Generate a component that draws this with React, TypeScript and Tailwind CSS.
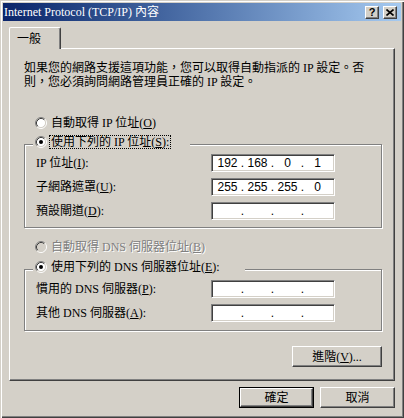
import React from "react";

function Radio({ checked, disabled }: { checked?: boolean; disabled?: boolean }) {
  return (
    <svg width="12" height="12" viewBox="0 0 12 12" className="shrink-0 block">
      <circle cx="6" cy="6" r="4.5" fill={disabled ? "#d4d0c8" : "#ffffff"} />
      <path d="M2.11 9.89A5.5 5.5 0 0 1 9.89 2.11" fill="none" stroke="#808080" />
      <path d="M9.89 2.11A5.5 5.5 0 0 1 2.11 9.89" fill="none" stroke="#ffffff" />
      <path d="M2.82 9.18A4.5 4.5 0 0 1 9.18 2.82" fill="none" stroke="#404040" />
      <path d="M9.18 2.82A4.5 4.5 0 0 1 2.82 9.18" fill="none" stroke="#d4d0c8" />
      {checked && <circle cx="6" cy="6" r="2" fill={disabled ? "#808080" : "#000000"} />}
    </svg>
  );
}

function IpBox({ v }: { v: string[] }) {
  return (
    <div className="w-[124px] h-[18px] bg-white border border-[#808080] border-b-white border-r-white shadow-[inset_1px_1px_#404040,inset_-1px_-1px_#d4d0c8] flex items-center pl-[3px] font-['Liberation_Sans',sans-serif] text-[12px] leading-[14px]">
      <span className="w-[25px] text-center">{v[0]}</span>
      <span className="w-[5px] text-center">.</span>
      <span className="w-[25px] text-center">{v[1]}</span>
      <span className="w-[5px] text-center">.</span>
      <span className="w-[25px] text-center">{v[2]}</span>
      <span className="w-[5px] text-center">.</span>
      <span className="w-[25px] text-center">{v[3]}</span>
    </div>
  );
}

function Row({ label, v }: { label: React.ReactNode; v: string[] }) {
  return (
    <div className="flex items-center h-[18px]">
      <div className="w-[175px] whitespace-nowrap">{label}</div>
      <IpBox v={v} />
    </div>
  );
}

function Raised({ children, className }: { children: React.ReactNode; className?: string }) {
  return (
    <div
      className={
        "flex items-center justify-center bg-[#d4d0c8] border border-white border-b-[#404040] border-r-[#404040] shadow-[inset_-1px_-1px_#808080] " +
        (className ?? "")
      }
    >
      {children}
    </div>
  );
}

export default function App() {
  return (
    <div className="w-[404px] h-[418px] bg-[#d4d0c8] p-[3px] shadow-[inset_1px_1px_#d4d0c8,inset_2px_2px_#ffffff,inset_-1px_-1px_#404040,inset_-2px_-2px_#808080] font-['Liberation_Serif','Noto_Sans_CJK_TC',serif] text-[12px] leading-[14px] text-black flex flex-col overflow-hidden">
      {/* Title bar */}
      <div className="h-[18px] shrink-0 flex items-center bg-linear-to-r from-[#0a246a] to-[#a6caf0] pl-[1px] pr-[4px]">
        <span className="text-white whitespace-nowrap">Internet Protocol (TCP/IP) 內容</span>
        <div className="ml-auto flex items-center gap-[4px]">
          <Raised className="w-[14px] h-[13px]">
            <span className="font-['Liberation_Sans',sans-serif] font-bold text-[11px] leading-[11px]">?</span>
          </Raised>
          <Raised className="w-[14px] h-[13px]">
            <svg width="8" height="7" viewBox="0 0 8 7" className="block">
              <path d="M0.5 0.5L7.5 6.5M7.5 0.5L0.5 6.5" stroke="#000" strokeWidth="1.6" />
            </svg>
          </Raised>
        </div>
      </div>

      {/* Tab area */}
      <div className="mt-[6px] px-[6px] flex flex-col">
        <div className="relative z-10 w-[52px] h-[22px] bg-[#d4d0c8] border-l border-t border-white border-r border-r-[#404040] rounded-tl-[2px] rounded-tr-[2px] shadow-[inset_-1px_0_#808080] pl-[7px] pt-[4px]">
          一般
        </div>
        <div className="-mt-[1px] w-[386px] h-[333px] border border-white border-b-[#404040] border-r-[#404040] shadow-[inset_-1px_-1px_#808080] flex flex-col">
          <p className="mt-[12px] ml-[14px] whitespace-nowrap">
            如果您的網路支援這項功能，您可以取得自動指派的 IP 設定。否
            <br />
            則，您必須詢問網路管理員正確的 IP 設定。
          </p>

          <div className="mt-[27px] ml-[25px] h-[14px] flex items-center gap-[4px]">
            <Radio />
            <span className="whitespace-nowrap">
              自動取得 IP 位址(<u>O</u>)
            </span>
          </div>

          {/* Group 1 */}
          <div className="relative mt-[14px] ml-[14px] w-[358px] h-[84px] border border-[#808080] shadow-[inset_1px_1px_#ffffff,1px_1px_#ffffff] pt-[9px] pl-[11px] flex flex-col gap-[6px]">
            <div className="absolute left-[8px] top-[-10px] w-[157px] h-[14px] bg-[#d4d0c8] flex items-center pl-[2px] gap-[2px]">
              <Radio checked />
              <span className="whitespace-nowrap border border-dotted border-black px-[1px] leading-[12px]">
                使用下列的 IP 位址(<u>S</u>):
              </span>
            </div>
            <Row label={<>IP 位址(<u>I</u>):</>} v={["192", "168", "0", "1"]} />
            <Row label={<>子網路遮罩(<u>U</u>):</>} v={["255", "255", "255", "0"]} />
            <Row label={<>預設閘道(<u>D</u>):</>} v={["", "", "", ""]} />
          </div>

          <div className="mt-[12px] ml-[25px] h-[14px] flex items-center gap-[4px]">
            <Radio disabled />
            <span className="whitespace-nowrap text-[#808080] [text-shadow:1px_1px_0_#ffffff]">
              自動取得 DNS 伺服器位址(<u>B</u>)
            </span>
          </div>

          {/* Group 2 */}
          <div className="relative mt-[15px] ml-[14px] w-[358px] h-[62px] border border-[#808080] shadow-[inset_1px_1px_#ffffff,1px_1px_#ffffff] pt-[10px] pl-[11px] flex flex-col gap-[6px]">
            <div className="absolute left-[8px] top-[-10px] w-[212px] h-[14px] bg-[#d4d0c8] flex items-center pl-[2px] gap-[4px]">
              <Radio checked />
              <span className="whitespace-nowrap">
                使用下列的 DNS 伺服器位址(<u>E</u>):
              </span>
            </div>
            <Row label={<>慣用的 DNS 伺服器(<u>P</u>):</>} v={["", "", "", ""]} />
            <Row label={<>其他 DNS 伺服器(<u>A</u>):</>} v={["", "", "", ""]} />
          </div>

          <div className="mt-[15px] flex justify-end pr-[12px]">
            <Raised className="w-[90px] h-[21px]">
              <span className="whitespace-nowrap">
                進階(<u>V</u>)...
              </span>
            </Raised>
          </div>
        </div>

        {/* Bottom buttons */}
        <div className="mt-[6px] flex justify-end gap-[6px]">
          <div className="w-[75px] h-[21px] border border-black flex">
            <Raised className="flex-1">確定</Raised>
          </div>
          <Raised className="w-[75px] h-[21px]">取消</Raised>
        </div>
      </div>
    </div>
  );
}
